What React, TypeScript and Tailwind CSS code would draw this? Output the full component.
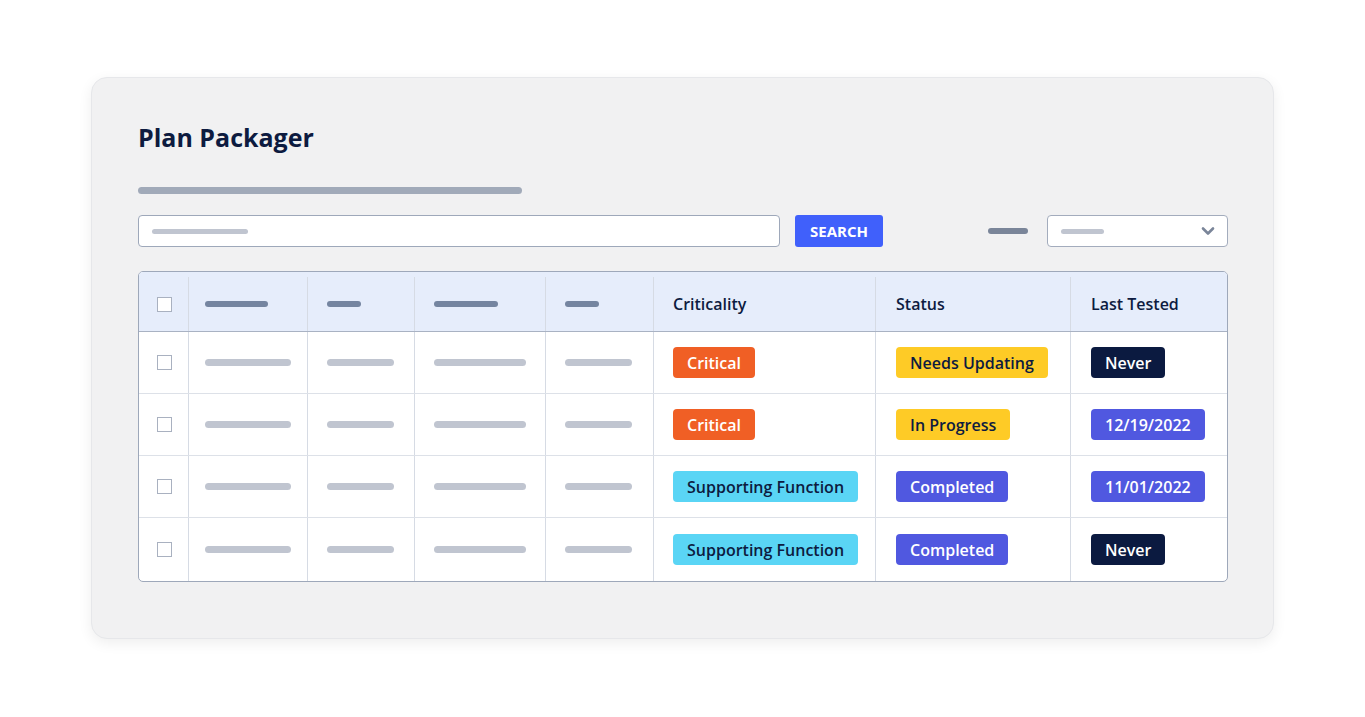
import React from 'react';

const cols = 'grid grid-cols-[50px_119px_107px_131px_108px_222px_195px_155px]';

type Badge = { text: string; cls: string };

const rows: { crit: Badge; status: Badge; tested: Badge }[] = [
  {
    crit: { text: 'Critical', cls: 'bg-[#f05f25] text-white' },
    status: { text: 'Needs Updating', cls: 'bg-[#fecb26] text-[#0d1b40]' },
    tested: { text: 'Never', cls: 'bg-[#0b1a40] text-white' },
  },
  {
    crit: { text: 'Critical', cls: 'bg-[#f05f25] text-white' },
    status: { text: 'In Progress', cls: 'bg-[#fecb26] text-[#0d1b40]' },
    tested: { text: '12/19/2022', cls: 'bg-[#5058e0] text-white' },
  },
  {
    crit: { text: 'Supporting Function', cls: 'bg-[#5ad5f5] text-[#0d1b40]' },
    status: { text: 'Completed', cls: 'bg-[#5058e0] text-white' },
    tested: { text: '11/01/2022', cls: 'bg-[#5058e0] text-white' },
  },
  {
    crit: { text: 'Supporting Function', cls: 'bg-[#5ad5f5] text-[#0d1b40]' },
    status: { text: 'Completed', cls: 'bg-[#5058e0] text-white' },
    tested: { text: 'Never', cls: 'bg-[#0b1a40] text-white' },
  },
];

const Pill = ({ b }: { b: Badge }) => (
  <span className={`inline-flex h-[31px] items-center rounded-[4px] px-[14px] text-[16px] font-semibold ${b.cls}`}>
    {b.text}
  </span>
);

const Checkbox = () => (
  <span className="block h-[15px] w-[15px] border border-[#a9b1c0] bg-white" />
);

const cell = 'flex items-center border-r border-[#d6dbe4]';

export default function App() {
  return (
    <div className="min-h-screen bg-white pt-[77px] font-['Open_Sans',sans-serif] text-[#0d1b40]">
      <div className="ml-[91px] h-[562px] w-[1183px] rounded-[16px] border border-[#e6e7ea] bg-[#f1f1f2] pl-[46px] pt-[43px] shadow-[0_4px_14px_rgba(0,0,0,0.07)]">
        <h1 className="text-[25px] font-bold leading-[32px]">Plan Packager</h1>

        <div className="mt-[34px] h-[7px] w-[384px] rounded-full bg-[#a1aab9]" />

        <div className="mt-[21px] flex h-[32px] items-center">
          <div className="flex h-full w-[642px] items-center rounded-[4px] border border-[#9ea8ba] bg-white pl-[13px]">
            <span className="h-[5px] w-[96px] rounded-full bg-[#c0c5d0]" />
          </div>
          <button className="ml-[15px] h-full w-[88px] rounded-[3px] bg-[#4060fb] text-[15px] font-bold text-white">
            SEARCH
          </button>
          <span className="ml-[105px] h-[6px] w-[40px] rounded-full bg-[#7a8599]" />
          <div className="ml-[19px] flex h-full w-[181px] items-center justify-between rounded-[4px] border border-[#a3acbd] bg-white pl-[13px] pr-[12px]">
            <span className="h-[5px] w-[43px] rounded-full bg-[#c0c5d0]" />
            <svg width="14" height="10" viewBox="0 0 14 10" fill="none">
              <path d="M2 2.5 7 7.5 12 2.5" stroke="#7a8599" strokeWidth="2.6" strokeLinecap="round" strokeLinejoin="round" />
            </svg>
          </div>
        </div>

        <div className="mt-[24px] w-[1090px] overflow-hidden rounded-[5px] border border-[#9ea8ba] bg-white">
          <div className={`${cols} h-[60px] border-b border-[#a9b2c3] bg-[#e6edfb] pt-[5px] text-[16px] font-semibold`}>
            <div className={`${cell} justify-center pl-[2px]`}>
              <Checkbox />
            </div>
            <div className={`${cell} pl-[16px]`}>
              <span className="h-[6px] w-[63px] rounded-full bg-[#7585a0]" />
            </div>
            <div className={`${cell} pl-[19px]`}>
              <span className="h-[6px] w-[34px] rounded-full bg-[#7585a0]" />
            </div>
            <div className={`${cell} pl-[19px]`}>
              <span className="h-[6px] w-[64px] rounded-full bg-[#7585a0]" />
            </div>
            <div className={`${cell} pl-[19px]`}>
              <span className="h-[6px] w-[34px] rounded-full bg-[#7585a0]" />
            </div>
            <div className={`${cell} pl-[19px]`}>Criticality</div>
            <div className={`${cell} pl-[20px]`}>Status</div>
            <div className="flex items-center pl-[20px]">Last Tested</div>
          </div>

          {rows.map((r, i) => (
            <div
              key={i}
              className={`${cols} ${i === rows.length - 1 ? 'h-[63px]' : 'h-[62px] border-b border-[#dde1e8]'}`}
            >
              <div className={`${cell} justify-center pl-[2px]`}>
                <Checkbox />
              </div>
              <div className={`${cell} pl-[16px]`}>
                <span className="h-[7px] w-[86px] rounded-full bg-[#c0c5d0]" />
              </div>
              <div className={`${cell} pl-[19px]`}>
                <span className="h-[7px] w-[67px] rounded-full bg-[#c0c5d0]" />
              </div>
              <div className={`${cell} pl-[19px]`}>
                <span className="h-[7px] w-[92px] rounded-full bg-[#c0c5d0]" />
              </div>
              <div className={`${cell} pl-[19px]`}>
                <span className="h-[7px] w-[67px] rounded-full bg-[#c0c5d0]" />
              </div>
              <div className={`${cell} pl-[19px]`}>
                <Pill b={r.crit} />
              </div>
              <div className={`${cell} pl-[20px]`}>
                <Pill b={r.status} />
              </div>
              <div className="flex items-center pl-[20px]">
                <Pill b={r.tested} />
              </div>
            </div>
          ))}
        </div>
      </div>
    </div>
  );
}
